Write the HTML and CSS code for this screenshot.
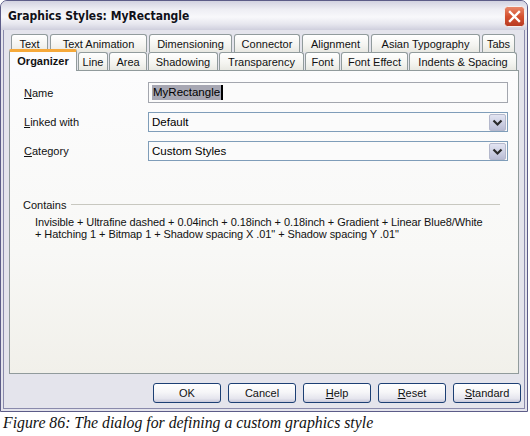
FILE: index.html
```html
<!DOCTYPE html>
<html>
<head>
<meta charset="utf-8">
<link rel="stylesheet" href="styles.css">
</head>
<body>
<div class="window">
  <div class="titlebar">
    <span class="title">Graphics Styles: MyRectangle</span>
    <span class="close">
      <svg width="21" height="21" viewBox="0 0 21 21">
        <defs>
          <linearGradient id="cg" x1="0" y1="0" x2="0" y2="1">
            <stop offset="0" stop-color="#e98a6c"/>
            <stop offset="0.5" stop-color="#d4502f"/>
            <stop offset="1" stop-color="#b63a22"/>
          </linearGradient>
        </defs>
        <rect x="0.5" y="0.5" width="20" height="20" rx="3" fill="url(#cg)" stroke="#f4f0f0"/>
        <path d="M6 6 L15 15 M15 6 L6 15" stroke="#fff" stroke-width="2.4" stroke-linecap="square"/>
      </svg>
    </span>
  </div>
  <div class="body">
    <div class="tabs">
      <div class="tabrow row1">
        <div class="tab">Text</div>
        <div class="tab">Text Animation</div>
        <div class="tab">Dimensioning</div>
        <div class="tab">Connector</div>
        <div class="tab">Alignment</div>
        <div class="tab">Asian Typography</div>
        <div class="tab">Tabs</div>
      </div>
      <div class="tabrow row2">
        <div class="tab active">Organizer</div>
        <div class="tab">Line</div>
        <div class="tab">Area</div>
        <div class="tab">Shadowing</div>
        <div class="tab">Transparency</div>
        <div class="tab">Font</div>
        <div class="tab">Font Effect</div>
        <div class="tab">Indents &amp; Spacing</div>
      </div>
    </div>
    <div class="panel">
      <div class="form">
        <div class="label"><u>N</u>ame</div>
        <div class="field input"><span class="sel">MyRectangle</span><span class="caret"></span></div>
        <div class="label"><u>L</u>inked with</div>
        <div class="field select"><span class="val">Default</span>
          <span class="drop"><svg width="17" height="17" viewBox="0 0 17 17"><polyline points="4.5,6.5 8.5,10.5 12.5,6.5" fill="none" stroke="#2a2a2a" stroke-width="2.2"/></svg></span>
        </div>
        <div class="label"><u>C</u>ategory</div>
        <div class="field select"><span class="val">Custom Styles</span>
          <span class="drop"><svg width="17" height="17" viewBox="0 0 17 17"><polyline points="4.5,6.5 8.5,10.5 12.5,6.5" fill="none" stroke="#2a2a2a" stroke-width="2.2"/></svg></span>
        </div>
      </div>
      <div class="contains">
        <div class="legend"><span>Contains</span><span class="rule"></span></div>
        <div class="desc">Invisible + Ultrafine dashed + 0.04inch + 0.18inch + 0.18inch + Gradient + Linear Blue8/White<br>+ Hatching 1 + Bitmap 1 + Shadow spacing X .01" + Shadow spacing Y .01"</div>
      </div>
    </div>
    <div class="buttons">
      <div class="btn">OK</div>
      <div class="btn">Cancel</div>
      <div class="btn"><u>H</u>elp</div>
      <div class="btn"><u>R</u>eset</div>
      <div class="btn"><u>S</u>tandard</div>
    </div>
  </div>
</div>
<div class="caption">Figure 86: The dialog for defining a custom graphics style</div>
</body>
</html>
```
FILE: styles.css
```css
html, body {
  margin: 0;
  padding: 0;
  background: #ffffff;
}
body {
  font-family: "Liberation Sans", Arial, sans-serif;
  font-size: 11px;
  color: #000;
  width: 530px;
  height: 436px;
  overflow: hidden;
}
.window {
  width: 528px;
  height: 412px;
  box-sizing: border-box;
  border: 1px solid #5c5c88;
  border-radius: 7px 7px 0 0;
  background: #e4e4ec;
  display: flex;
  flex-direction: column;
  overflow: hidden;
  box-shadow: inset 0 0 0 2px #e4e4ec, inset 0 0 0 3px #8a8aac;
}
.titlebar {
  height: 29px;
  flex: none;
  display: flex;
  align-items: center;
  justify-content: space-between;
  padding: 0 2px 0 7px;
  background: linear-gradient(#d2d2e0 0%, #eeeef4 30%, #f8f8fb 55%, #e6e6ee 80%, #cfcfdd 100%);
}
.title {
  font-weight: bold;
  font-size: 12px;
  color: #101018;
  font-family: "DejaVu Sans Condensed", "DejaVu Sans", sans-serif;
  margin-top: 1px;
}
.close {
  display: flex;
  width: 21px;
  height: 21px;
  margin-top: 2px;
}
.body {
  flex: 1;
  display: flex;
  flex-direction: column;
  padding: 4px 8px 0 8px;
}
.tabs {
  height: 36px;
  position: relative;
  z-index: 2;
}
.tabrow {
  display: flex;
  align-items: flex-end;
  height: 18px;
}
.row1 {
  gap: 2px;
  margin-left: 2px;
}
.row2 {
  gap: 1px;
}
.tab {
  box-sizing: border-box;
  height: 18px;
  border: 1px solid #919b9c;
  border-bottom: none;
  border-radius: 3px 3px 0 0;
  background: linear-gradient(#ffffff, #f4f4f0 60%, #e8e8e2);
  display: flex;
  align-items: center;
  justify-content: center;
  white-space: nowrap;
  color: #111;
}
.row1 .tab:nth-child(1) { width: 37px; }
.row1 .tab:nth-child(2) { width: 97px; }
.row1 .tab:nth-child(3) { width: 83px; }
.row1 .tab:nth-child(4) { width: 66px; }
.row1 .tab:nth-child(5) { width: 67px; }
.row1 .tab:nth-child(6) { width: 109px; }
.row1 .tab:nth-child(7) { width: 33px; }
.row2 .tab:nth-child(1) { width: 68px; }
.row2 .tab:nth-child(2) { width: 30px; }
.row2 .tab:nth-child(3) { width: 38px; }
.row2 .tab:nth-child(4) { width: 70px; }
.row2 .tab:nth-child(5) { width: 85px; }
.row2 .tab:nth-child(6) { width: 35px; }
.row2 .tab:nth-child(7) { width: 67px; }
.row2 .tab:nth-child(8) { width: 108px; }
.tab.active {
  height: 22px;
  margin-bottom: -1px;
  border-top: 3px solid #f6a93a;
  border-radius: 2px 2px 0 0;
  background: #fcfcfe;
  font-weight: bold;
  padding-bottom: 1px;
  position: relative;
  z-index: 3;
}
.panel {
  height: 304px;
  box-sizing: border-box;
  border: 1px solid #919b9c;
  background: linear-gradient(#fcfcfd, #f8f8f6 60%, #f1f0ea);
  padding: 11px 10px 0 14px;
  position: relative;
  z-index: 1;
}
.form {
  display: grid;
  grid-template-columns: 124px 360px;
  grid-template-rows: 21px 20px 20px;
  row-gap: 9px;
}
.label {
  display: flex;
  align-items: center;
  color: #111;
}
.field {
  box-sizing: border-box;
  display: flex;
  align-items: center;
  background: #fbfbfb;
  padding-left: 3px;
}
.input {
  border: 1px solid #a3a6ae;
}
.sel {
  background: #a7a7b3;
  color: #000;
  font-size: 11.5px;
  padding: 0 1px;
  line-height: 15px;
}
.caret {
  width: 2px;
  height: 15px;
  background: #000;
}
.select {
  border: 1px solid #7f9db9;
  justify-content: space-between;
  padding-right: 1px;
}
.val {
  font-size: 11.5px;
}
.drop {
  width: 17px;
  height: 17px;
  box-sizing: border-box;
  border: 1px solid #b4b8cc;
  border-radius: 2px;
  background: linear-gradient(#e2e4f2, #c6c9de 70%, #b9bcd4);
  display: flex;
  align-items: center;
  justify-content: center;
}
.drop svg {
  flex: none;
}
.contains {
  margin-top: 37px;
}
.legend {
  display: flex;
  align-items: center;
  height: 13px;
  margin-left: -1px;
  margin-right: 8px;
  gap: 5px;
  color: #111;
}
.rule {
  flex: 1;
  height: 1px;
  background: #c8c8c0;
}
.desc {
  margin-top: 5px;
  padding-left: 11px;
  line-height: 12px;
  color: #111;
  white-space: nowrap;
  letter-spacing: -0.08px;
}
.buttons {
  display: flex;
  justify-content: flex-end;
  gap: 7px;
  margin-top: 9px;
  margin-right: -2px;
}
.btn {
  width: 68px;
  height: 20px;
  box-sizing: border-box;
  border: 1px solid #1c3f74;
  border-radius: 3px;
  background: linear-gradient(#ffffff 0%, #f6f6f8 45%, #e6e6ee 80%, #c8c8da 100%);
  display: flex;
  align-items: center;
  justify-content: center;
  color: #111;
}
.caption {
  margin-top: 2px;
  margin-left: 3px;
  font-family: "Liberation Serif", "Times New Roman", serif;
  font-style: italic;
  font-size: 15.8px;
  line-height: 18px;
  color: #111;
}
```
